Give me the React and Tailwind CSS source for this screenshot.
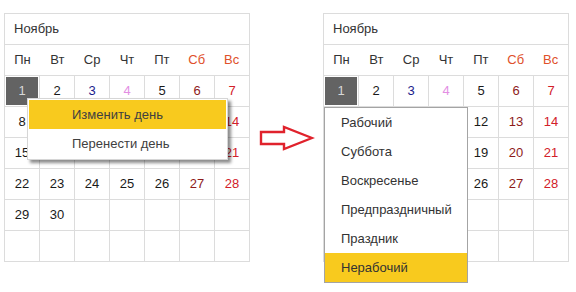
import React from "react";

const dayNames = ["Пн", "Вт", "Ср", "Чт", "Пт", "Сб", "Вс"];

// colour of a date by column / special marks
const dateColor = (d, col) => {
  if (d === 3) return "text-[#1c1c8c]";
  if (d === 4) return "text-[#e38ee3]";
  if (col === 5) return "text-[#8e1b1b]";
  if (col === 6) return "text-[#d2202a]";
  return "text-[#1a1a1a]";
};

const weeks = [
  [1, 2, 3, 4, 5, 6, 7],
  [8, 9, 10, 11, 12, 13, 14],
  [15, 16, 17, 18, 19, 20, 21],
  [22, 23, 24, 25, 26, 27, 28],
  [29, 30, null, null, null, null, null],
  [null, null, null, null, null, null, null],
];

// dates covered by the popup menus
const coveredLeft = [9, 10, 11, 12, 13, 16, 17, 18, 19, 20];
const coveredRight = [8, 9, 10, 11, 15, 16, 17, 18, 22, 23, 24, 25, 29, 30];

const Calendar = ({ covered = [], children }) => (
  <div className="relative w-[246px] border-l border-t border-[#dcdcdc] bg-white">
    <div className="h-[31px] border-b border-r border-[#dcdcdc] flex items-center pl-[9px] text-[13px] text-[#333]">
      Ноябрь
    </div>
    <div className="grid grid-cols-7 h-[31px] border-b border-r border-[#dcdcdc]">
      {dayNames.map((n, i) => (
        <div
          key={n}
          className={`flex items-center justify-center text-[13px] ${
            i >= 5 ? "text-[#e0502a]" : "text-[#333]"
          }`}
        >
          {n}
        </div>
      ))}
    </div>
    {weeks.map((w, wi) => (
      <div key={wi} className="grid grid-cols-7">
        {w.map((d, i) => (
          <div
            key={i}
            className="h-[31px] border-b border-r border-[#dcdcdc] p-px"
          >
            {d === 1 ? (
              <div className="h-full w-full bg-[#636363] flex items-center justify-center text-[13px] text-[#d8d8d8]">
                1
              </div>
            ) : (
              <div
                className={`h-full w-full flex items-center justify-center text-[13px] ${dateColor(
                  d,
                  i
                )}`}
              >
                {covered.includes(d) ? null : d}
              </div>
            )}
          </div>
        ))}
      </div>
    ))}
    {children}
  </div>
);

const types = [
  "Рабочий",
  "Суббота",
  "Воскресенье",
  "Предпраздничный",
  "Праздник",
  "Нерабочий",
];

export default function App() {
  return (
    <div
      className="w-[576px] h-[292px] bg-white flex items-start pl-[4px] pt-[13px]"
      style={{ fontFamily: '"Liberation Sans", Arial, sans-serif' }}
    >
      <Calendar covered={coveredLeft}>
        <div className="absolute left-[22px] top-[84px] w-[201px] border border-[#d6d6d6] bg-white p-px shadow-[3px_3px_3px_rgba(0,0,0,0.45)]">
          <div className="h-[29px] bg-[#f8ca1e] flex items-center pl-[43px] text-[13px] text-[#404040]">
            Изменить день
          </div>
          <div className="h-[29px] flex items-center pl-[43px] text-[13px] text-[#404040]">
            Перенести день
          </div>
        </div>
      </Calendar>

      <div className="w-[73px] flex justify-center pt-[112px]">
        <svg width="56" height="26" viewBox="0 0 56 26">
          <path
            d="M2 7 H25 V2 L53 13 L25 24 V19 H2 Z"
            fill="none"
            stroke="#e0222c"
            strokeWidth="2.4"
            strokeLinejoin="miter"
          />
        </svg>
      </div>

      <Calendar covered={coveredRight}>
        <div className="absolute left-0 top-[93px] w-[144px] border border-[#a4a4a4] bg-white">
          {types.map((t, i) => (
            <div
              key={t}
              className={`h-[29px] flex items-center pl-[16px] text-[13px] text-[#333] ${
                i === 5 ? "bg-[#f8ca1e]" : ""
              }`}
            >
              {t}
            </div>
          ))}
        </div>
      </Calendar>
    </div>
  );
}
